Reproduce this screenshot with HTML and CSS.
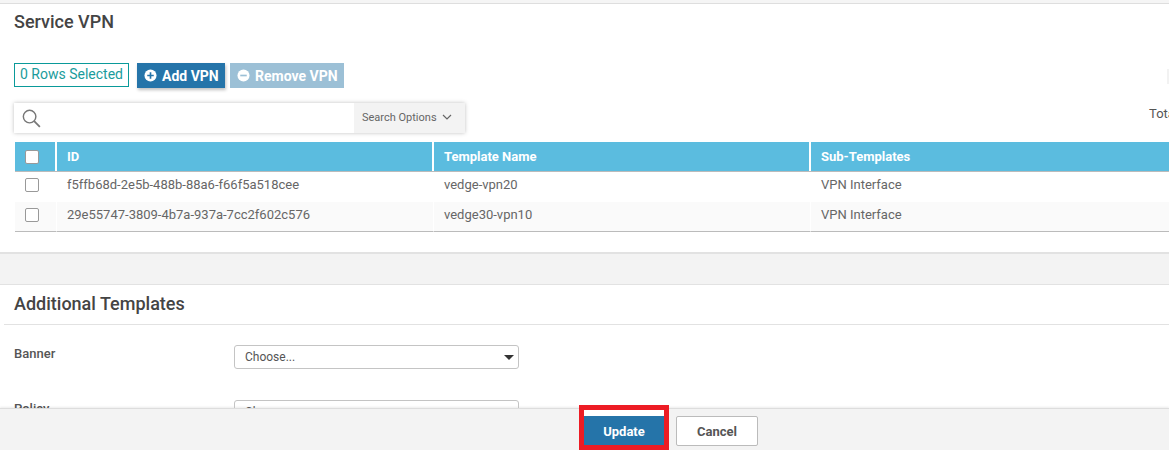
FILE: index.html
```html
<!DOCTYPE html>
<html lang="en">
<head>
<meta charset="UTF-8">
<meta name="viewport" content="width=device-width, initial-scale=1.0">
<title>Service VPN</title>
<link rel="stylesheet" href="styles.css">
</head>
<body>
<div class="page">
    <div class="content">
        <section class="vpn-section">
            <h2>Service VPN</h2>
            <div class="toolbar">
                <span class="selected">0 Rows Selected</span>
                <button class="btn btn-add">
                    <svg class="btn-icon" viewBox="0 0 14 14"><circle cx="7" cy="7" r="6.5" fill="#fff"/><path d="M7 3.5v7M3.5 7h7" stroke="#2574a9" stroke-width="1.8"/></svg>
                    Add VPN
                </button>
                <button class="btn btn-remove">
                    <svg class="btn-icon" viewBox="0 0 14 14"><circle cx="7" cy="7" r="6.5" fill="#fff"/><path d="M3.5 7h7" stroke="#9cc0d6" stroke-width="1.8"/></svg>
                    Remove VPN
                </button>
                <span class="edge-shadow"></span>
            </div>
            <div class="search-row">
                <div class="search">
                    <svg class="search-icon" viewBox="0 0 20 20"><circle cx="8" cy="8" r="6.6" fill="none" stroke="#777" stroke-width="1.5"/><path d="M12.8 12.8l6 6" stroke="#777" stroke-width="1.9"/></svg>
                    <div class="search-options">
                        Search Options
                        <svg class="chevron" viewBox="0 0 10 6"><path d="M1 1l4 4 4-4" fill="none" stroke="#666" stroke-width="1.2"/></svg>
                    </div>
                </div>
                <span class="total">Total Rows: 2</span>
            </div>
            <div class="grid">
                <div class="grid-row grid-head">
                    <div class="cell cell-check"><span class="check check-head"></span></div>
                    <div class="cell cell-id">ID</div>
                    <div class="cell cell-name">Template Name</div>
                    <div class="cell cell-sub">Sub-Templates</div>
                </div>
                <div class="grid-row">
                    <div class="cell cell-check"><span class="check"></span></div>
                    <div class="cell cell-id">f5ffb68d-2e5b-488b-88a6-f66f5a518cee</div>
                    <div class="cell cell-name">vedge-vpn20</div>
                    <div class="cell cell-sub">VPN Interface</div>
                </div>
                <div class="grid-row grid-row-alt">
                    <div class="cell cell-check"><span class="check"></span></div>
                    <div class="cell cell-id">29e55747-3809-4b7a-937a-7cc2f602c576</div>
                    <div class="cell cell-name">vedge30-vpn10</div>
                    <div class="cell cell-sub">VPN Interface</div>
                </div>
            </div>
        </section>
        <div class="spacer"></div>
        <section class="extra-section">
            <h2 class="extra-title">Additional Templates</h2>
            <div class="form-row">
                <label>Banner</label>
                <div class="select">Choose...<span class="caret"></span></div>
            </div>
            <div class="form-row">
                <label>Policy</label>
                <div class="select">Choose...<span class="caret"></span></div>
            </div>
        </section>
    </div>
    <div class="footer">
        <div class="update-wrap">
            <button class="btn-update">Update</button>
        </div>
        <button class="btn-cancel">Cancel</button>
    </div>
</div>
</body>
</html>
```

FILE: styles.css
```css
* {
    box-sizing: border-box;
}
body {
    font-family: Roboto, "Liberation Sans", sans-serif;
    margin: 0;
    padding: 0;
    background-color: #fff;
    color: #555;
}
.page {
    height: 450px;
    display: flex;
    flex-direction: column;
    overflow: hidden;
    background-color: #f5f5f5;
    padding-top: 3px;
}
.content {
    height: 405px;
    flex: none;
    overflow: hidden;
}
.vpn-section {
    height: 251px;
    padding: 0 0 0 14px;
    background-color: #fff;
    border-top: 1px solid #dedede;
    border-bottom: 2px solid #e2e2e2;
    overflow: hidden;
}
h2 {
    margin: 0;
    font-size: 18px;
    font-weight: 500;
    line-height: 24px;
    color: #444;
}
.vpn-section h2 {
    padding-top: 6px;
}
.toolbar {
    display: flex;
    align-items: flex-start;
    margin-top: 29px;
    position: relative;
}
.selected {
    width: 115px;
    height: 24px;
    line-height: 21px;
    text-align: center;
    font-size: 14px;
    color: #1a9c9c;
    border: 1px solid #0a9a9a;
}
.btn {
    display: flex;
    align-items: center;
    height: 25px;
    padding: 0 6px 0 7px;
    border: none;
    font-family: inherit;
    font-size: 14px;
    font-weight: 700;
    color: #fff;
}
.btn-icon {
    width: 13px;
    height: 13px;
    margin-right: 5px;
}
.btn-add {
    width: 88px;
    margin-left: 8px;
    background-color: #2574a9;
    box-shadow: 1px 2px 3px rgba(0, 0, 0, 0.25);
}
.btn-remove {
    width: 114px;
    margin-left: 5px;
    background-color: #9cc0d6;
}
.edge-shadow {
    position: absolute;
    left: 1153px;
    top: 6px;
    width: 2px;
    height: 15px;
    background-color: #f2f2f2;
}
.search-row {
    display: flex;
    margin-top: 15px;
    width: 1300px;
}
.search {
    flex: none;
    width: 451px;
    height: 30px;
    display: flex;
    justify-content: space-between;
    align-items: center;
    background-color: #fff;
    box-shadow: 0 0 4px rgba(0, 0, 0, 0.25);
}
.search-icon {
    width: 19px;
    height: 19px;
    margin-left: 8px;
    margin-top: 1px;
}
.search-options {
    width: 111px;
    height: 30px;
    display: flex;
    align-items: center;
    justify-content: space-between;
    padding: 0 13px 2px 8px;
    font-size: 11px;
    color: #666;
    background-color: #f3f3f3;
}
.chevron {
    width: 10px;
    height: 6px;
}
.total {
    margin-left: 684px;
    font-size: 13px;
    line-height: 22px;
    white-space: nowrap;
}
.grid {
    margin-top: 9px;
    margin-left: 1px;
    width: 1170px;
    color: #666;
}
.grid-row {
    display: flex;
    height: 30px;
    font-size: 13px;
}
.grid-row-alt {
    background-color: #fafafa;
}
.grid-row-alt .cell {
    padding-bottom: 4px;
    border-bottom: 1px solid #bbb;
}
.grid-head {
    background-color: #5bbcdf;
    color: #fff;
    font-weight: 700;
    border-bottom: 1px solid #bbb;
}
.cell {
    display: flex;
    align-items: center;
    padding-left: 10px;
    padding-bottom: 5px;
    border-right: 1px solid #fff;
}
.grid-head .cell {
    padding-bottom: 0;
    border-right: 2px solid #fff;
}
.cell-check {
    width: 42px;
    padding-left: 10px;
}
.cell-id {
    width: 377px;
}
.cell-name {
    width: 377px;
}
.cell-sub {
    flex: 1;
    border-right: none;
}
.grid-head .cell-sub {
    border-right: none;
}
.check {
    width: 14px;
    height: 14px;
    background-color: #fff;
    border: 1px solid #999;
    border-radius: 2px;
}
.extra-section {
    background-color: #fff;
    border-top: 1px solid #e2e2e2;
}
.spacer {
    height: 30px;
    background-color: #f3f3f3;
}
.extra-title {
    height: 40px;
    margin-left: 4px;
    padding: 7px 0 0 10px;
    border-bottom: 1px solid #e2e2e2;
}
.form-row {
    display: flex;
    height: 55px;
    padding: 20px 0 0 14px;
}
.form-row label {
    width: 220px;
    padding-top: 1px;
    font-size: 13px;
    font-weight: 500;
}
.select {
    position: relative;
    width: 285px;
    height: 24px;
    padding-left: 10px;
    line-height: 23px;
    font-size: 12px;
    border: 1px solid #c4c4c4;
    border-radius: 3px;
}
.caret {
    position: absolute;
    right: 4px;
    top: 9px;
    border-top: 5px solid #333;
    border-left: 5px solid transparent;
    border-right: 5px solid transparent;
}
.footer {
    flex: 1;
    display: flex;
    align-items: flex-start;
    gap: 7px;
    padding-left: 579px;
    background-color: #f3f3f3;
    border-top: 1px solid #ddd;
    box-shadow: 0 -1px 2px rgba(0, 0, 0, 0.08);
}
.update-wrap {
    width: 90px;
    height: 45px;
    margin-top: -4px;
    padding-top: 6px;
    background-color: #fff;
    border: 5px solid #ed1c24;
}
.btn-update {
    display: block;
    width: 100%;
    height: 29px;
    padding-top: 3px;
    border: none;
    font-family: inherit;
    font-size: 13px;
    font-weight: 700;
    color: #fff;
    background-color: #2574a9;
}
.btn-cancel {
    width: 82px;
    height: 30px;
    margin-top: 7px;
    font-family: inherit;
    font-size: 13px;
    font-weight: 700;
    color: #555;
    background-color: #fff;
    border: 1px solid #bbb;
    border-radius: 2px;
}
```
